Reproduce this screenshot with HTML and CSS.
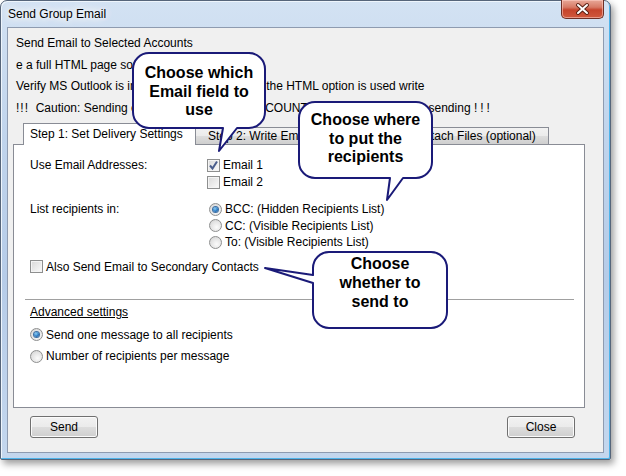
FILE: index.html
```html
<!DOCTYPE html>
<html>
<head>
<meta charset="utf-8">
<title>Send Group Email</title>
<link rel="stylesheet" href="styles.css">
</head>
<body>
<div class="window">
  <div class="titlebar">
    <span class="title">Send Group Email</span>
    <div class="close-btn">
      <svg width="41" height="18" viewBox="0 0 41 18">
        <path d="M16 5 L25 13 M25 5 L16 13" stroke="#5a2014" stroke-width="4" stroke-linecap="round"/>
        <path d="M16 5 L25 13 M25 5 L16 13" stroke="#ffffff" stroke-width="2" stroke-linecap="round"/>
      </svg>
    </div>
  </div>
  <div class="client">
    <div class="info">
      <p>Send Email to Selected Accounts</p>
      <p>e a full HTML page source:</p>
      <p>Verify MS Outlook is installed and open. When the HTML option is used write</p>
      <p><span class="bang-lead">!!!</span>&nbsp; Caution: Sending emails to SELECTED ACCOUNTS. Check all ok before sending <span class="bang">!!!</span></p>
    </div>
    <div class="tabs">
      <div class="tab tab-active">Step 1: Set Delivery Settings</div>
      <div class="tab tab-2">Step 2: Write Email Message</div>
      <div class="tab tab-3">Step 3: Attach Files (optional)</div>
    </div>
    <div class="panel">
      <div class="group group-email">
        <div class="glabel">Use Email Addresses:</div>
        <div class="gopts">
          <div class="opt"><span class="cb checked"><svg width="11" height="11" viewBox="0 0 11 11"><path d="M2 5.5 L4.5 8.5 L9 1.5" fill="none" stroke="#4a5d8c" stroke-width="2"/></svg></span>Email 1</div>
          <div class="opt"><span class="cb"></span>Email 2</div>
        </div>
      </div>
      <div class="group group-list">
        <div class="glabel">List recipients in:</div>
        <div class="gopts">
          <div class="opt ropt"><span class="rb on"></span>BCC: (Hidden Recipients List)</div>
          <div class="opt ropt"><span class="rb"></span>CC: (Visible Recipients List)</div>
          <div class="opt ropt"><span class="rb"></span>To: (Visible Recipients List)</div>
        </div>
      </div>
      <div class="opt secondary"><span class="cb"></span>Also Send Email to Secondary Contacts</div>
      <div class="separator"></div>
      <div class="advanced">
        <div class="adv-title">Advanced settings</div>
        <div class="opt adv-opt"><span class="rb on"></span>Send one message to all recipients</div>
        <div class="opt adv-opt"><span class="rb"></span>Number of recipients per message</div>
      </div>
    </div>
    <div class="buttons">
      <button class="btn">Send</button>
      <button class="btn">Close</button>
    </div>
  </div>

  <div class="callout callout-1">
    <svg class="bubble" width="140" height="106" viewBox="0 0 140 106">
      <path d="M19 3 H119 A16 16 0 0 1 135 19 V62 A16 16 0 0 1 119 78 H107 L89 101 L93 78 H19 A16 16 0 0 1 3 62 V19 A16 16 0 0 1 19 3 Z" fill="#ffffff" stroke="#1a1a78" stroke-width="2" stroke-linejoin="round"/>
    </svg>
    <div class="ctext">Choose which<br>Email field to<br>use</div>
  </div>
  <div class="callout callout-2">
    <svg class="bubble" width="140" height="106" viewBox="0 0 140 106">
      <path d="M19 3 H120 A16 16 0 0 1 136 19 V63 A16 16 0 0 1 120 79 H107 L91 101 L94 79 H19 A16 16 0 0 1 3 63 V19 A16 16 0 0 1 19 3 Z" fill="#ffffff" stroke="#1a1a78" stroke-width="2" stroke-linejoin="round"/>
    </svg>
    <div class="ctext">Choose where<br>to put the<br>recipients</div>
  </div>
  <div class="callout callout-3">
    <svg class="bubble" width="190" height="84" viewBox="0 0 190 84">
      <path d="M67 3 H169 A16 16 0 0 1 185 19 V63 A16 16 0 0 1 169 79 H67 A16 16 0 0 1 51 63 V34 L3 19 L51 26 V19 A16 16 0 0 1 67 3 Z" fill="#ffffff" stroke="#1a1a78" stroke-width="2" stroke-linejoin="round"/>
    </svg>
    <div class="ctext">Choose<br>whether to<br>send to</div>
  </div>
</div>
</body>
</html>
```

FILE: styles.css
```css
* { box-sizing: border-box; }

html, body {
  margin: 0;
  padding: 0;
  background: #ffffff;
}

body {
  width: 626px;
  height: 476px;
  overflow: hidden;
  font-family: "Liberation Sans", Arial, sans-serif;
  font-size: 12px;
  color: #000;
}

.window {
  position: relative;
  width: 611px;
  height: 460px;
  border: 1px solid #56657a;
  border-radius: 7px 7px 2px 2px;
  background: linear-gradient(180deg, #d3e2f3 0%, #c0d4ec 30%, #b6cce8 60%, #c4d7ee 100%);
  box-shadow: 3px 4px 7px rgba(0, 0, 0, 0.38), inset -1px -1px 0 #4fb4ea, inset 1px 1px 0 #eef5fc;
}

.titlebar {
  height: 26px;
  display: flex;
  align-items: flex-start;
  padding-left: 7px;
}

.title {
  margin-top: 6px;
  font-size: 12px;
  line-height: 14px;
  color: #000;
  text-shadow: 0 0 6px #ffffff, 0 0 10px #ffffff, 0 0 12px #ffffff;
}

.close-btn {
  margin-left: auto;
  margin-right: 6px;
  margin-top: -1px;
  width: 43px;
  height: 19px;
  border: 1px solid #6e2f26;
  border-top: none;
  border-radius: 0 0 5px 5px;
  background: linear-gradient(180deg, #e8a898 0%, #d77a66 40%, #c6442c 55%, #d0583d 100%);
  box-shadow: inset 0 0 0 1px rgba(255, 210, 200, 0.55);
  display: flex;
  align-items: center;
  justify-content: center;
}

.close-btn svg { display: block; }

.client {
  margin: 0 6px;
  height: 426px;
  background: #f0f0f0;
  border: 1px solid #8e9bb0;
}

.info {
  padding: 5px 0 0 8px;
}

.info p {
  margin: 0;
  line-height: 21.7px;
  white-space: nowrap;
}

.bang-lead {
  letter-spacing: 1px;
}

.bang {
  letter-spacing: 3px;
}

.tabs {
  margin-top: 3px;
  height: 21px;
  padding-left: 15px;
  display: flex;
  align-items: flex-end;
  position: relative;
  z-index: 1;
}

.tab {
  height: 17px;
  line-height: 16px;
  border: 1px solid #898c95;
  border-bottom: none;
  background: linear-gradient(180deg, #f2f2f2 0%, #ebebeb 50%, #dddddd 51%, #cfcfcf 100%);
  white-space: nowrap;
  overflow: hidden;
  padding-left: 13px;
}

.tab-active {
  width: 173px;
  height: 22px;
  line-height: 21px;
  margin-bottom: -1px;
  padding-left: 6px;
  background: #ffffff;
  position: relative;
  z-index: 2;
}

.tab-2 {
  width: 171px;
  margin-left: -1px;
  border-left: none;
}

.tab-3 {
  width: 184px;
  border-left: 1px solid #898c95;
  margin-left: -1px;
}

.panel {
  margin-left: 5px;
  width: 572px;
  height: 264px;
  background: #ffffff;
  border: 1px solid #898c95;
  padding: 12px 0 0 16px;
}

.group {
  display: grid;
  grid-template-columns: 177px 1fr;
}

.glabel {
  line-height: 17px;
}

.opt {
  display: flex;
  align-items: center;
  height: 17px;
  white-space: nowrap;
}

.group-list {
  margin-top: 10px;
}

.group-list .glabel {
  line-height: 16.5px;
}

.ropt {
  height: 16.5px;
  padding-left: 2px;
}

.cb {
  position: relative;
  width: 13px;
  height: 13px;
  margin-right: 3px;
  border: 1px solid #8e8f8f;
  background: linear-gradient(135deg, #d9d9d9 0%, #ededed 60%, #fbfbfb 100%);
  box-shadow: inset 0 0 0 1px #f4f4f4;
  flex: none;
  display: flex;
  align-items: center;
  justify-content: center;
}

.cb svg { display: block; }

.rb {
  width: 13px;
  height: 13px;
  margin-right: 3px;
  border: 1px solid #8e8f8f;
  border-radius: 50%;
  background: radial-gradient(circle at 60% 65%, #fbfbfb 0%, #e4e4e4 55%, #cdcdcd 100%);
  flex: none;
  display: flex;
  align-items: center;
  justify-content: center;
}

.rb.on::after {
  content: "";
  width: 5px;
  height: 5px;
  border-radius: 50%;
  background: radial-gradient(circle at 40% 35%, #8fd0f5 0%, #2b7bc4 55%, #16437c 100%);
  box-shadow: 0 0 0 1px #3d6fa3;
}

.secondary {
  margin-top: 8px;
}

.separator {
  margin: 24px 10px 0 -5px;
  height: 1px;
  background: #a0a0a0;
}

.advanced {
  margin-top: 2px;
}

.adv-title {
  line-height: 21.5px;
  text-decoration: underline;
}

.adv-opt {
  height: 21.5px;
}

.buttons {
  display: flex;
  justify-content: space-between;
  padding: 8px 28px 0 22px;
}

.btn {
  width: 68px;
  height: 22px;
  padding: 0;
  border: 1px solid #707070;
  border-radius: 3px;
  background: linear-gradient(180deg, #f2f2f2 0%, #ebebeb 50%, #dddddd 51%, #cfcfcf 100%);
  box-shadow: inset 0 0 0 1px #fbfbfb;
  font-family: "Liberation Sans", Arial, sans-serif;
  font-size: 12px;
  color: #000;
}

.callout {
  position: absolute;
  z-index: 5;
}

.bubble {
  position: absolute;
  left: 0;
  top: 0;
  display: block;
}

.ctext {
  position: absolute;
  text-align: center;
  font-family: "Liberation Sans", Arial, sans-serif;
  font-weight: bold;
  font-size: 16px;
  line-height: 18.5px;
  color: #000;
  white-space: nowrap;
}

.callout-1 {
  left: 129px;
  top: 49px;
  width: 140px;
  height: 106px;
}

.callout-1 .ctext {
  left: 3px;
  top: 14px;
  width: 132px;
}

.callout-2 {
  left: 295px;
  top: 98px;
  width: 140px;
  height: 106px;
}

.callout-2 .ctext {
  left: 3px;
  top: 12px;
  width: 133px;
}

.callout-3 {
  left: 261px;
  top: 248px;
  width: 190px;
  height: 84px;
}

.callout-3 .ctext {
  left: 51px;
  top: 5px;
  width: 134px;
  line-height: 19px;
}
```
